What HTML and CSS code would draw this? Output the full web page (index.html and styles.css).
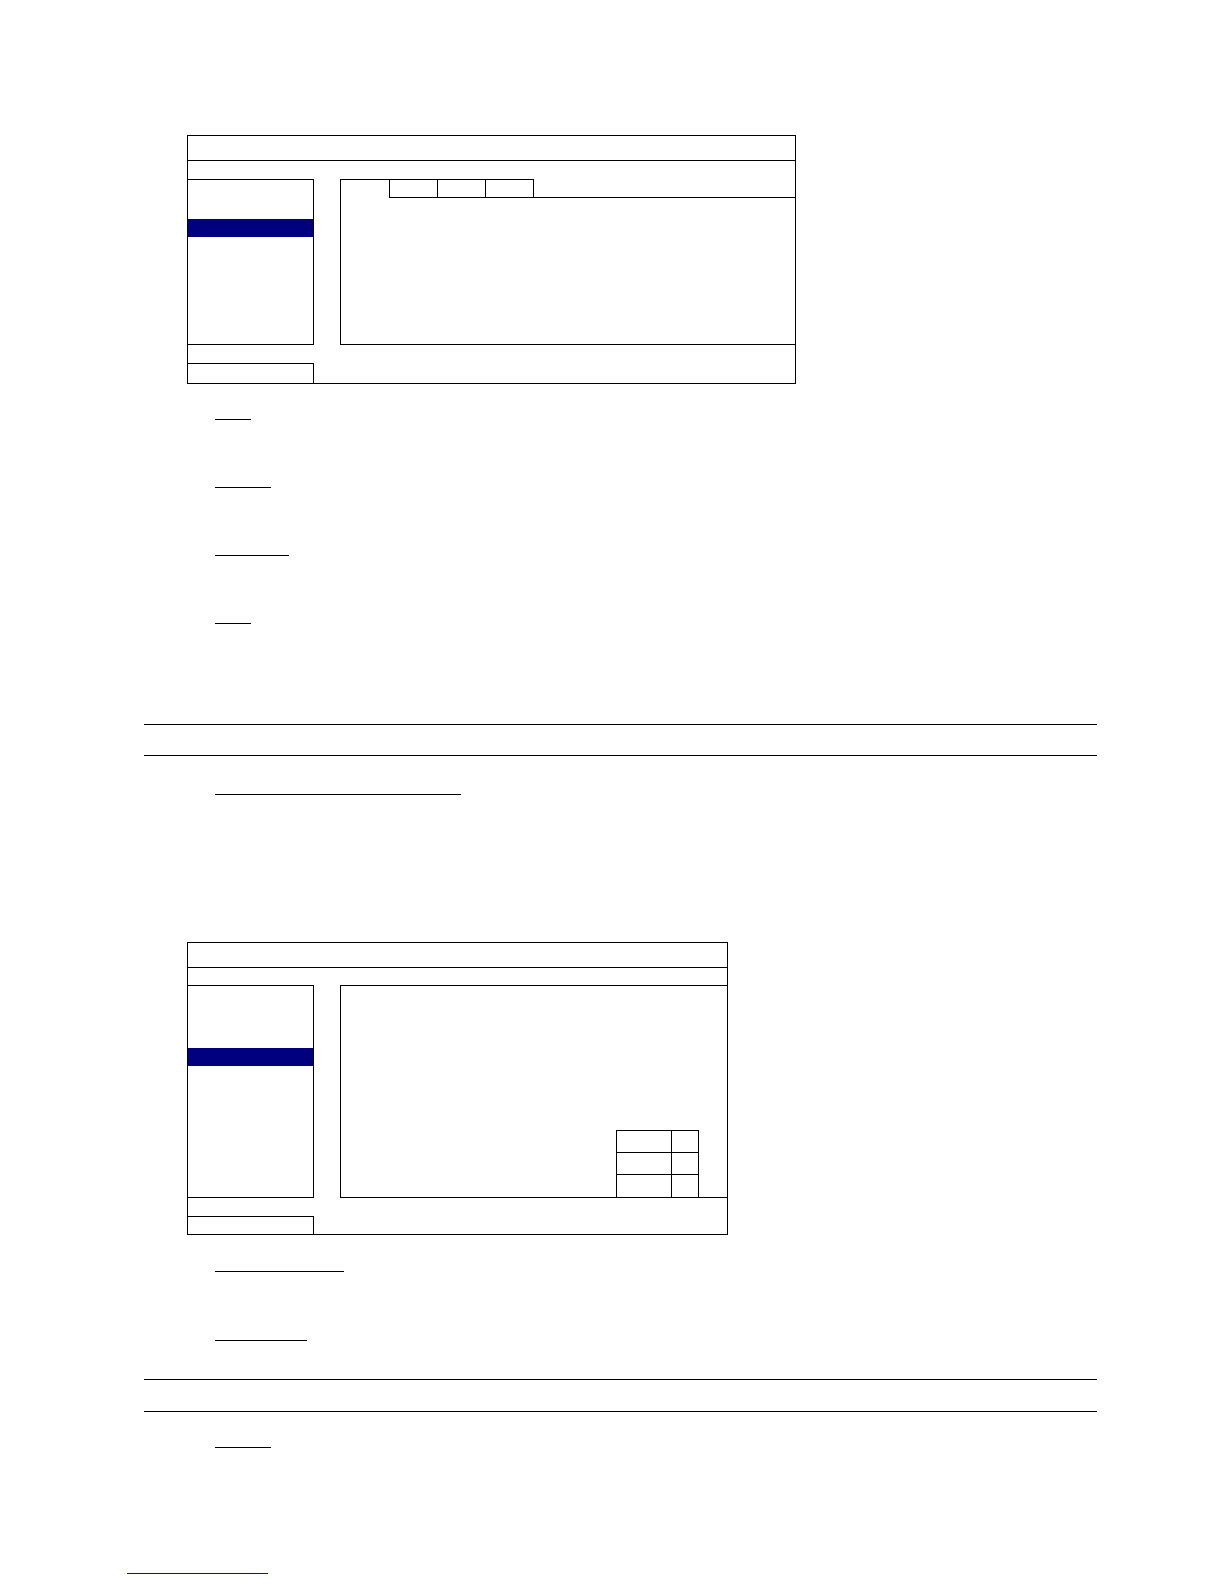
FILE: index.html
```html
<!DOCTYPE html>
<html>
<head>
<meta charset="utf-8">
<title>Manual page</title>
<link rel="stylesheet" href="styles.css">
</head>
<body>
<div class="page">
  <div class="win win-a">
    <div class="title"></div>
    <div class="gap"></div>
    <div class="body body-a">
      <div class="list"><div class="item"></div><div class="item"></div><div class="item sel"></div></div>
      <div class="spacer"></div>
      <div class="main main-a">
        <div class="tabs">
          <div class="tab-lead"></div>
          <div class="tab"></div>
          <div class="tab"></div>
          <div class="tab"></div>
          <div class="tab-rest"></div>
        </div>
      </div>
    </div>
    <div class="foot"><div class="btn"></div></div>
  </div>

  <div class="heads heads-a">
    <div class="uline w36"></div>
    <div class="uline w56"></div>
    <div class="uline w74"></div>
    <div class="uline w36"></div>
  </div>

  <div class="rule rule-a1"></div>
  <div class="rule rule-a2"></div>

  <div class="uline w246 after-rule-a"></div>

  <div class="win win-b">
    <div class="title"></div>
    <div class="gap gap-b"></div>
    <div class="body body-b">
      <div class="list"><div class="item"></div><div class="item"></div><div class="item"></div><div class="item sel"></div></div>
      <div class="spacer"></div>
      <div class="main main-b">
        <div class="grid">
          <div class="cell"></div><div class="cell"></div>
          <div class="cell"></div><div class="cell"></div>
          <div class="cell"></div><div class="cell"></div>
        </div>
      </div>
    </div>
    <div class="foot foot-b"><div class="btn btn-b"></div></div>
  </div>

  <div class="heads heads-b">
    <div class="uline w129"></div>
    <div class="uline w92"></div>
  </div>

  <div class="rule rule-b1"></div>
  <div class="rule rule-b2"></div>

  <div class="uline w56 after-rule-b"></div>

  <div class="link"></div>
</div>
</body>
</html>
```

FILE: styles.css
```css
html, body {
  margin: 0;
  padding: 0;
  background: #fff;
  font-family: "Liberation Sans", Arial, sans-serif;
}
.page {
  width: 1224px;
  padding-top: 135px;
  padding-bottom: 4px;
  box-sizing: border-box;
}
.win {
  box-sizing: border-box;
  border: 1px solid #000;
  margin-left: 187px;
}
.win-a { width: 609px; }
.win-b { width: 541px; margin-top: 147px; }

.title { height: 24px; border-bottom: 1px solid #000; }
.gap { height: 18px; }
.gap-b { height: 17px; }
.body { display: flex; }
.body-a { height: 166px; }
.body-b { height: 213px; }

.list {
  box-sizing: border-box;
  width: 126px;
  border-top: 1px solid #000;
  border-right: 1px solid #000;
  border-bottom: 1px solid #000;
}
.item { height: 18px; }
.body-a .list { padding-top: 3px; }
.body-b .list { padding-top: 8px; }
.item.sel { background: #010180; }

.spacer { width: 26px; }
.main {
  flex: 1;
  box-sizing: border-box;
  border-left: 1px solid #000;
  border-bottom: 1px solid #000;
  display: flex;
  flex-direction: column;
}
.main-b { border-top: 1px solid #000; justify-content: flex-end; align-items: flex-end; }

.tabs { display: flex; height: 19px; }
.tab-lead { width: 48px; border-top: 1px solid #000; }
.tab {
  box-sizing: border-box;
  width: 49px;
  margin-right: -1px;
  border: 1px solid #000;
}
.tab-rest { flex: 1; border-bottom: 1px solid #000; margin-left: 1px; }

.grid {
  display: grid;
  grid-template-columns: 55px 27px;
  grid-auto-rows: 22px;
  margin-right: 28px;
  border-top: 1px solid #000;
  border-left: 1px solid #000;
}
.cell { border-right: 1px solid #000; border-bottom: 1px solid #000; }
.grid .cell:nth-last-child(-n+2) { border-bottom: none; }

.foot { height: 38px; display: flex; align-items: flex-end; }
.foot-b { height: 36px; }
.btn {
  box-sizing: border-box;
  width: 126px;
  height: 20px;
  border-top: 1px solid #000;
  border-right: 1px solid #000;
}
.btn-b { height: 18px; }

.heads { display: flex; flex-direction: column; gap: 67px; margin-left: 215px; }
.heads-a { margin-top: 35px; }
.heads-b { margin-top: 36px; gap: 68px; }
.uline { height: 0; border-top: 1px solid #000; }
.after-rule-a { margin-left: 215px; margin-top: 38px; }
.after-rule-b { margin-left: 215px; margin-top: 35px; }
.w36 { width: 36px; }
.w56 { width: 56px; }
.w74 { width: 74px; }
.w92 { width: 92px; }
.w129 { width: 129px; }
.w246 { width: 246px; }

.rule { margin-left: 144px; width: 953px; border-top: 1px solid #000; }
.rule-a1 { margin-top: 100px; }
.rule-a2 { margin-top: 30px; }
.rule-b1 { margin-top: 38px; }
.rule-b2 { margin-top: 31px; }

.link {
  margin-left: 127px;
  width: 141px;
  margin-top: 125px;
  border-top: 1px solid #0000ff;
}
```
